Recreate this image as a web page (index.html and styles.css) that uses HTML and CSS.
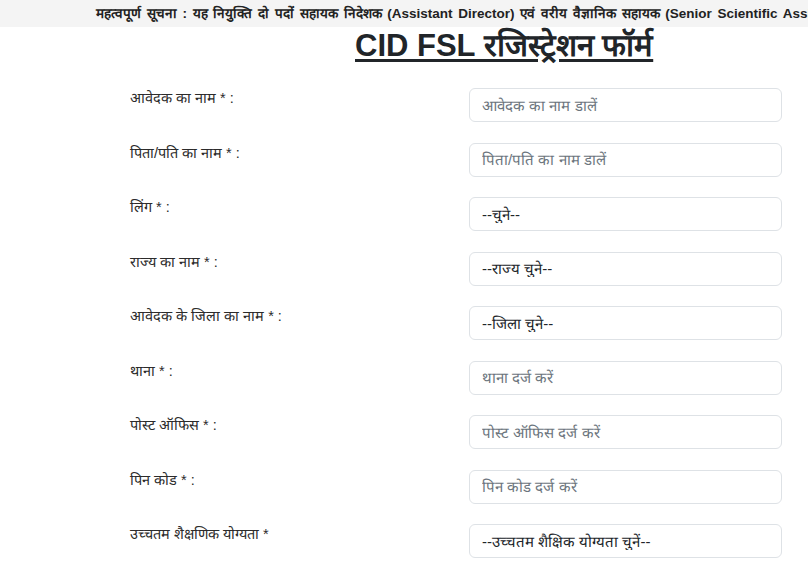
FILE: index.html
```html
<!DOCTYPE html>
<html lang="hi">
<head>
    <meta charset="UTF-8">
    <meta name="viewport" content="width=device-width, initial-scale=1.0">
    <title>CID FSL रजिस्ट्रेशन फॉर्म</title>
    <link rel="stylesheet" href="styles.css">
</head>
<body>
    <div class="notice">
        <div class="notice-text">महत्वपूर्ण सूचना : यह नियुक्ति दो पदों सहायक निदेशक (Assistant Director) एवं वरीय वैज्ञानिक सहायक (Senior Scientific Assistant) के लिए है।</div>
    </div>

    <h1 class="title">CID FSL रजिस्ट्रेशन फॉर्म</h1>

    <form class="reg-form">
        <div class="form-row">
            <label>आवेदक का नाम * :</label>
            <input type="text" placeholder="आवेदक का नाम डालें">
        </div>
        <div class="form-row">
            <label>पिता/पति का नाम * :</label>
            <input type="text" placeholder="पिता/पति का नाम डालें">
        </div>
        <div class="form-row">
            <label>लिंग * :</label>
            <select>
                <option>--चुने--</option>
                <option>पुरुष</option>
                <option>महिला</option>
            </select>
        </div>
        <div class="form-row">
            <label>राज्य का नाम * :</label>
            <select>
                <option>--राज्य चुने--</option>
            </select>
        </div>
        <div class="form-row">
            <label>आवेदक के जिला का नाम * :</label>
            <select>
                <option>--जिला चुने--</option>
            </select>
        </div>
        <div class="form-row">
            <label>थाना * :</label>
            <input type="text" placeholder="थाना दर्ज करें">
        </div>
        <div class="form-row">
            <label>पोस्ट ऑफिस * :</label>
            <input type="text" placeholder="पोस्ट ऑफिस दर्ज करें">
        </div>
        <div class="form-row">
            <label>पिन कोड * :</label>
            <input type="text" placeholder="पिन कोड दर्ज करें">
        </div>
        <div class="form-row">
            <label>उच्चतम शैक्षणिक योग्यता *</label>
            <select>
                <option>--उच्चतम शैक्षिक योग्यता चुनें--</option>
            </select>
        </div>
    </form>
</body>
</html>
```

FILE: styles.css
```css
body {
    font-family: "Liberation Sans", Arial, sans-serif;
    margin: 0;
    padding: 0;
    background-color: #fff;
    color: #212529;
    overflow: hidden;
}

/* Scrolling notice strip */
.notice {
    background-color: #f4f4f4;
    height: 27px;
    overflow: hidden;
    white-space: nowrap;
}

.notice-text {
    padding-left: 96px;
    font-size: 13.5px;
    font-weight: bold;
    line-height: 27px;
    word-spacing: 2px;
    color: #222;
}

.title {
    margin: 0 0 0 355px;
    font-size: 31px;
    font-weight: bold;
    text-decoration: underline;
    text-underline-offset: 3px;
    line-height: 38px;
    color: #212529;
}

.reg-form {
    margin: 23px 0 0 130px;
    width: 652px;
}

.form-row {
    display: flex;
    justify-content: space-between;
    align-items: flex-start;
    margin-bottom: 20.5px;
}

.form-row label {
    font-size: 14.5px;
    line-height: 20px;
    color: #2b2b2b;
}

.form-row input,
.form-row select {
    box-sizing: border-box;
    width: 313px;
    height: 34px;
    padding: 0 12px;
    font-family: inherit;
    font-size: 15px;
    color: #212529;
    background-color: #fff;
    border: 1px solid #dee2e6;
    border-radius: 6px;
    appearance: none;
}

.form-row input::placeholder {
    color: #6c757d;
}
```
